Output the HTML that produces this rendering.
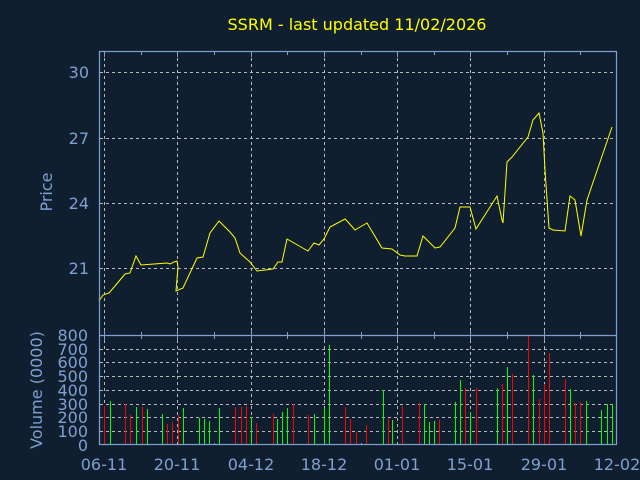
<!DOCTYPE html>
<html><head><meta charset="utf-8"><style>
html,body{margin:0;padding:0;background:#101f30;}
svg{display:block;}
text{font-family:"DejaVu Sans","Liberation Sans",sans-serif;}
</style></head><body>
<svg width="640" height="480" viewBox="0 0 640 480" xmlns="http://www.w3.org/2000/svg">
<rect width="640" height="480" fill="#101f30"/>
<text x="357" y="30" fill="#ffff00" font-size="16" text-anchor="middle">SSRM - last updated 11/02/2026</text>
<g stroke="#b8b8b8" stroke-width="1" stroke-dasharray="3,3">
<line x1="100" y1="72.5" x2="616" y2="72.5"/>
<line x1="100" y1="138.5" x2="616" y2="138.5"/>
<line x1="100" y1="203.5" x2="616" y2="203.5"/>
<line x1="100" y1="268.5" x2="616" y2="268.5"/>
<line x1="100" y1="349.5" x2="616" y2="349.5"/>
<line x1="100" y1="362.5" x2="616" y2="362.5"/>
<line x1="100" y1="376.5" x2="616" y2="376.5"/>
<line x1="100" y1="390.5" x2="616" y2="390.5"/>
<line x1="100" y1="404.5" x2="616" y2="404.5"/>
<line x1="100" y1="417.5" x2="616" y2="417.5"/>
<line x1="100" y1="431.5" x2="616" y2="431.5"/>
<line x1="104.5" y1="52" x2="104.5" y2="444"/>
<line x1="177.5" y1="52" x2="177.5" y2="444"/>
<line x1="251.5" y1="52" x2="251.5" y2="444"/>
<line x1="324.5" y1="52" x2="324.5" y2="444"/>
<line x1="397.5" y1="52" x2="397.5" y2="444"/>
<line x1="470.5" y1="52" x2="470.5" y2="444"/>
<line x1="544.5" y1="52" x2="544.5" y2="444"/>
</g>
<g stroke-width="1">
<g stroke="#ff0000">
<line x1="104.5" y1="406" x2="104.5" y2="445"/><line x1="125.5" y1="404" x2="125.5" y2="445"/><line x1="130.5" y1="415" x2="130.5" y2="445"/><line x1="142.5" y1="407" x2="142.5" y2="445"/><line x1="167.5" y1="424" x2="167.5" y2="445"/><line x1="172.5" y1="422" x2="172.5" y2="445"/><line x1="178.5" y1="415" x2="178.5" y2="445"/><line x1="235.5" y1="407" x2="235.5" y2="445"/><line x1="241.5" y1="407" x2="241.5" y2="445"/><line x1="246.5" y1="406" x2="246.5" y2="445"/><line x1="256.5" y1="423" x2="256.5" y2="445"/><line x1="273.5" y1="414" x2="273.5" y2="445"/><line x1="293.5" y1="404" x2="293.5" y2="445"/><line x1="308.5" y1="415" x2="308.5" y2="445"/><line x1="345.5" y1="407" x2="345.5" y2="445"/><line x1="350.5" y1="419" x2="350.5" y2="445"/><line x1="356.5" y1="432" x2="356.5" y2="445"/><line x1="366.5" y1="425" x2="366.5" y2="445"/><line x1="388.5" y1="418" x2="388.5" y2="445"/><line x1="402.5" y1="406" x2="402.5" y2="445"/><line x1="419.5" y1="403" x2="419.5" y2="445"/><line x1="439.5" y1="420" x2="439.5" y2="445"/><line x1="465.5" y1="388" x2="465.5" y2="445"/><line x1="476.5" y1="388" x2="476.5" y2="445"/><line x1="502.5" y1="384" x2="502.5" y2="445"/><line x1="512.5" y1="374" x2="512.5" y2="445"/><line x1="528.5" y1="336" x2="528.5" y2="445"/><line x1="539.5" y1="399" x2="539.5" y2="445"/><line x1="544.5" y1="384" x2="544.5" y2="445"/><line x1="549.5" y1="353" x2="549.5" y2="445"/><line x1="565.5" y1="379" x2="565.5" y2="445"/><line x1="575.5" y1="403" x2="575.5" y2="445"/><line x1="580.5" y1="402" x2="580.5" y2="445"/>
</g>
<g stroke="#00ff00">
<line x1="110.5" y1="401" x2="110.5" y2="445"/><line x1="136.5" y1="407" x2="136.5" y2="445"/><line x1="147.5" y1="409" x2="147.5" y2="445"/><line x1="162.5" y1="414" x2="162.5" y2="445"/><line x1="183.5" y1="408" x2="183.5" y2="445"/><line x1="199.5" y1="418" x2="199.5" y2="445"/><line x1="204.5" y1="419" x2="204.5" y2="445"/><line x1="209.5" y1="421" x2="209.5" y2="445"/><line x1="219.5" y1="408" x2="219.5" y2="445"/><line x1="251.5" y1="417" x2="251.5" y2="445"/><line x1="277.5" y1="419" x2="277.5" y2="445"/><line x1="282.5" y1="412" x2="282.5" y2="445"/><line x1="287.5" y1="408" x2="287.5" y2="445"/><line x1="314.5" y1="414" x2="314.5" y2="445"/><line x1="324.5" y1="408" x2="324.5" y2="445"/><line x1="329.5" y1="345" x2="329.5" y2="445"/><line x1="383.5" y1="390" x2="383.5" y2="445"/><line x1="392.5" y1="420" x2="392.5" y2="445"/><line x1="424.5" y1="404" x2="424.5" y2="445"/><line x1="429.5" y1="422" x2="429.5" y2="445"/><line x1="434.5" y1="421" x2="434.5" y2="445"/><line x1="455.5" y1="402" x2="455.5" y2="445"/><line x1="460.5" y1="380" x2="460.5" y2="445"/><line x1="470.5" y1="412" x2="470.5" y2="445"/><line x1="497.5" y1="388" x2="497.5" y2="445"/><line x1="507.5" y1="367" x2="507.5" y2="445"/><line x1="533.5" y1="375" x2="533.5" y2="445"/><line x1="570.5" y1="389" x2="570.5" y2="445"/><line x1="586.5" y1="401" x2="586.5" y2="445"/><line x1="601.5" y1="410" x2="601.5" y2="445"/><line x1="607.5" y1="404" x2="607.5" y2="445"/><line x1="612.5" y1="404" x2="612.5" y2="445"/>
</g>
<g stroke="#7fa0d0"><line x1="214.5" y1="443" x2="214.5" y2="445"/><line x1="361.5" y1="443" x2="361.5" y2="445"/></g>
</g>
<polyline fill="none" stroke="#ffff00" stroke-width="1" points="99,301 103,295 109,293 115,286 125,274 130,273 136,256 141,265 154,264 167,263 170,264 174,262 177,261 178,267 176,291 183,288 197,258 203,257 210,233 219,221 230,232 235,238 240,253 250,262 257,271 273,269 278,262 282,262 287,239 308,251 314,243 319,245 324,239 330,227 345,219 348,222 355,230 360,227 367,223 382,248 392,249 400,255 405,256 417,256 423,236 435,248 440,247 455,228 460,207 470,207 476,229 497,196 502,220 503,223 507,162 512,157 528,137 533,120 539,113 543,133 545,170 549,228 553,230 565,231 570,196 575,200 581,236 587,200 612,127"/>
<g stroke="#7fa0d0" stroke-width="1.2" fill="none">
<rect x="99.5" y="51.5" width="517" height="393"/>
<line x1="99" y1="335.5" x2="617" y2="335.5"/>
</g>
<g stroke="#7fa0d0" stroke-width="1">
<line x1="104.5" y1="52" x2="104.5" y2="57"/><line x1="177.5" y1="52" x2="177.5" y2="57"/><line x1="251.5" y1="52" x2="251.5" y2="57"/><line x1="324.5" y1="52" x2="324.5" y2="57"/><line x1="397.5" y1="52" x2="397.5" y2="57"/><line x1="470.5" y1="52" x2="470.5" y2="57"/><line x1="544.5" y1="52" x2="544.5" y2="57"/>
<line x1="141.5" y1="52" x2="141.5" y2="55"/><line x1="214.5" y1="52" x2="214.5" y2="55"/><line x1="287.5" y1="52" x2="287.5" y2="55"/><line x1="361.5" y1="52" x2="361.5" y2="55"/><line x1="434.5" y1="52" x2="434.5" y2="55"/><line x1="507.5" y1="52" x2="507.5" y2="55"/><line x1="580.5" y1="52" x2="580.5" y2="55"/>
<line x1="104.5" y1="330" x2="104.5" y2="341"/><line x1="177.5" y1="330" x2="177.5" y2="341"/><line x1="251.5" y1="330" x2="251.5" y2="341"/><line x1="324.5" y1="330" x2="324.5" y2="341"/><line x1="397.5" y1="330" x2="397.5" y2="341"/><line x1="470.5" y1="330" x2="470.5" y2="341"/><line x1="544.5" y1="330" x2="544.5" y2="341"/>
<line x1="141.5" y1="332" x2="141.5" y2="339"/><line x1="214.5" y1="332" x2="214.5" y2="339"/><line x1="287.5" y1="332" x2="287.5" y2="339"/><line x1="361.5" y1="332" x2="361.5" y2="339"/><line x1="434.5" y1="332" x2="434.5" y2="339"/><line x1="507.5" y1="332" x2="507.5" y2="339"/><line x1="580.5" y1="332" x2="580.5" y2="339"/>
</g>
<g fill="#7fa0d0" font-size="16" text-anchor="end">
<text x="89" y="78">30</text><text x="89" y="144">27</text><text x="89" y="209">24</text><text x="89" y="274">21</text>
<text x="88" y="341">800</text><text x="88" y="355">700</text><text x="88" y="368">600</text><text x="88" y="382">500</text><text x="88" y="396">400</text><text x="88" y="410">300</text><text x="88" y="423">200</text><text x="88" y="437">100</text><text x="88" y="451">0</text>
</g>
<g fill="#7fa0d0" font-size="16" text-anchor="middle">
<text x="104" y="470">06-11</text><text x="177" y="470">20-11</text><text x="251" y="470">04-12</text><text x="324" y="470">18-12</text><text x="397" y="470">01-01</text><text x="470" y="470">15-01</text><text x="544" y="470">29-01</text><text x="617" y="470">12-02</text>
</g>
<text transform="translate(52,192) rotate(-90)" fill="#7fa0d0" font-size="16" text-anchor="middle">Price</text>
<text transform="translate(42,390) rotate(-90)" fill="#7fa0d0" font-size="16" text-anchor="middle">Volume (0000)</text>
</svg>
</body></html>
